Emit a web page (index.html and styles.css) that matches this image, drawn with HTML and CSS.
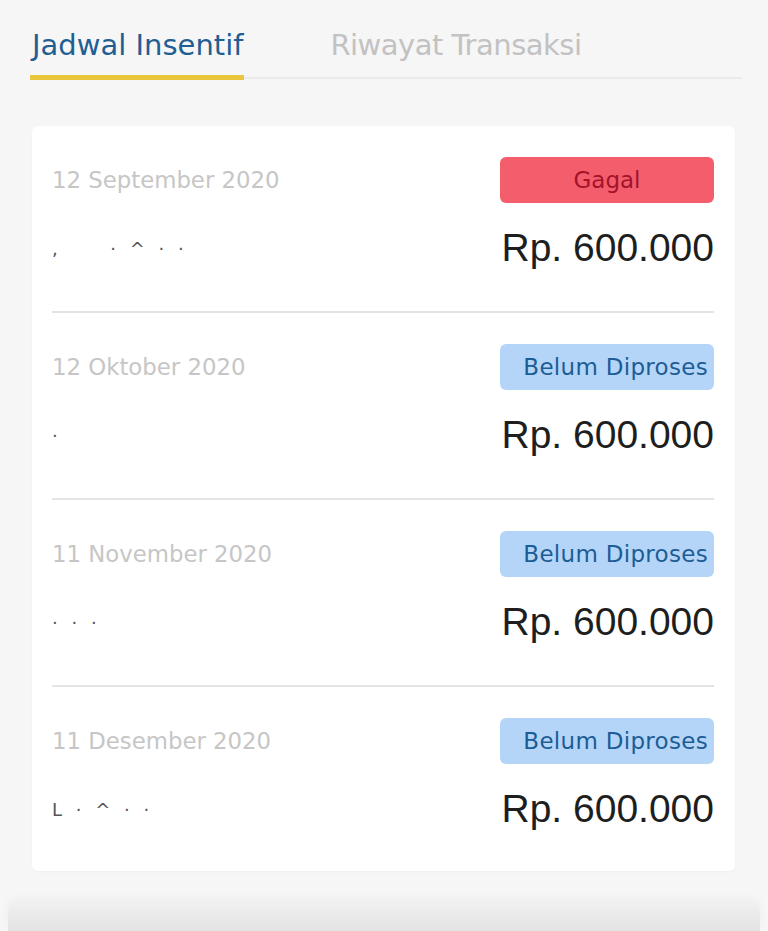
FILE: index.html
```html
<!DOCTYPE html>
<html lang="id">
<head>
<meta charset="utf-8">
<title>Jadwal Insentif</title>
<link rel="stylesheet" href="styles.css">
</head>
<body>
<div class="page">
  <nav class="tabs">
    <div class="tab active">Jadwal Insentif</div>
    <div class="tab second">Riwayat Transaksi</div>
  </nav>
  <section class="card">
    <div class="row">
      <div class="top">
        <span class="date">12 September 2020</span>
        <span class="badge fail">Gagal</span>
      </div>
      <div class="bottom">
        <span class="name">,&nbsp;&nbsp;&nbsp;&nbsp;&nbsp;· ^ · ·</span>
        <span class="amount">Rp. 600.000</span>
      </div>
    </div>
    <div class="row">
      <div class="top">
        <span class="date">12 Oktober 2020</span>
        <span class="badge pending">Belum Diproses</span>
      </div>
      <div class="bottom">
        <span class="name">·</span>
        <span class="amount">Rp. 600.000</span>
      </div>
    </div>
    <div class="row">
      <div class="top">
        <span class="date">11 November 2020</span>
        <span class="badge pending">Belum Diproses</span>
      </div>
      <div class="bottom">
        <span class="name">· · ·</span>
        <span class="amount">Rp. 600.000</span>
      </div>
    </div>
    <div class="row">
      <div class="top">
        <span class="date">11 Desember 2020</span>
        <span class="badge pending">Belum Diproses</span>
      </div>
      <div class="bottom">
        <span class="name">L · ^ · ·</span>
        <span class="amount">Rp. 600.000</span>
      </div>
    </div>
  </section>
  <div class="sheet"></div>
</div>
</body>
</html>
```

FILE: styles.css
```css
html, body {
  margin: 0;
  padding: 0;
}
body {
  background: #f6f6f6;
  font-family: "DejaVu Sans", "Noto Sans", sans-serif;
  width: 768px;
  height: 931px;
  overflow: hidden;
}
.page {
  display: flex;
  flex-direction: column;
  height: 931px;
}
.tabs {
  display: flex;
  margin: 0 26px 0 30px;
  padding-top: 29px;
  border-bottom: 2px solid #ebebeb;
  gap: 84px;
}
.tab {
  font-size: 29px;
  color: #c2c2c2;
  padding: 0 1px 14px 2px;
  margin-bottom: -3px;
  border-bottom: 5px solid transparent;
  line-height: 32px;
}
.tab.second {
  letter-spacing: -0.5px;
}
.tab.active {
  color: #1f5f93;
  border-bottom-color: #e9c63c;
}
.card {
  margin: 47px 33px 0 32px;
  background: #ffffff;
  border-radius: 6px;
  padding: 0 21px 0 20px;
  box-shadow: 0 1px 3px rgba(0,0,0,0.03);
}
.row {
  padding: 31px 0 41px;
  border-bottom: 2px solid #e4e4e4;
}
.row:last-child {
  border-bottom: none;
  padding-bottom: 40px;
}
.top, .bottom {
  display: flex;
  justify-content: space-between;
  align-items: center;
}
.top {
  height: 46px;
}
.bottom {
  margin-top: 23px;
  height: 44px;
}
.date {
  font-size: 22.8px;
  color: #c6c6c6;
}
.badge {
  width: 214px;
  height: 46px;
  box-sizing: border-box;
  border-radius: 6px;
  display: flex;
  align-items: center;
  justify-content: center;
  font-size: 23px;
}
.badge.fail {
  background: #f45d6c;
  color: #a3142b;
}
.badge.pending {
  background: #b5d5f8;
  color: #1c5d95;
  justify-content: flex-end;
  padding-right: 6px;
  letter-spacing: 0.3px;
}
.name {
  font-size: 18px;
  color: #555;
  letter-spacing: 4px;
}
.amount {
  font-family: "Liberation Sans", Arial, sans-serif;
  font-size: 39px;
  color: #1e1e1e;
}
.sheet {
  margin: 32px 8px 0;
  flex: 1;
  background: linear-gradient(#f0f0f0, #e3e3e3);
  border-radius: 8px 8px 0 0;
  box-shadow: 0 -4px 10px rgba(0,0,0,0.04);
}
```
